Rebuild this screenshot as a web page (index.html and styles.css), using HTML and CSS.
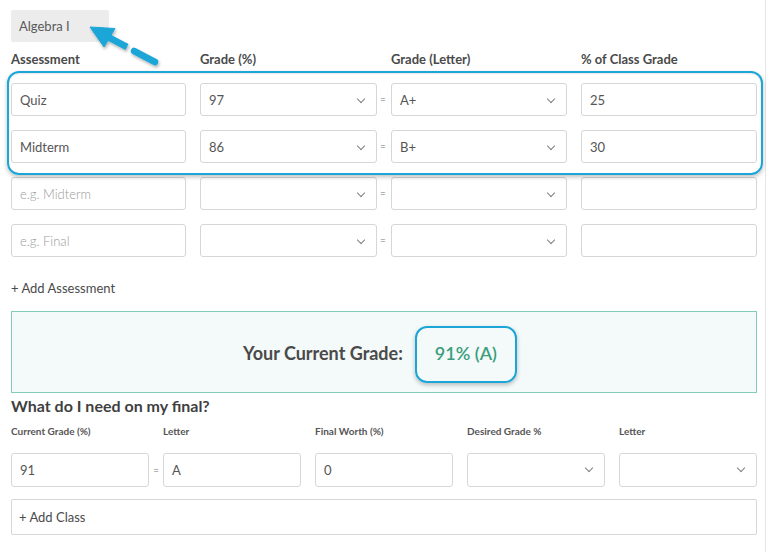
FILE: index.html
```html
<!DOCTYPE html>
<html>
<head>
<meta charset="utf-8">
<link rel="stylesheet" href="styles.css">
</head>
<body>
<div class="page">
  <div class="tabbar"><div class="tab">Algebra I</div></div>
  <svg class="arrow" width="180" height="80" viewBox="0 0 180 80">
    <defs>
      <filter id="sh" x="-20%" y="-20%" width="140%" height="140%">
        <feDropShadow dx="1" dy="2" stdDeviation="1.5" flood-color="#000" flood-opacity="0.3"/>
      </filter>
    </defs>
    <g filter="url(#sh)" fill="#1ba6d7" stroke="#1ba6d7">
      <polygon points="90,27 115,28.5 104,47" stroke-width="1" stroke-linejoin="round"/>
      <line x1="106" y1="36" x2="127" y2="47" stroke-width="6.5"/>
      <line x1="134" y1="51" x2="155" y2="62" stroke-width="6.5" stroke-linecap="round"/>
    </g>
  </svg>

  <div class="grid">
    <div class="hd">Assessment</div><div></div>
    <div class="hd">Grade (%)</div><div></div>
    <div class="hd">Grade (Letter)</div><div></div>
    <div class="hd">% of Class Grade</div>

    <div class="field">Quiz</div><div></div>
    <div class="field sel">97<span class="chev"></span></div><div class="eq">=</div>
    <div class="field sel">A+<span class="chev"></span></div><div></div>
    <div class="field">25</div>

    <div class="field">Midterm</div><div></div>
    <div class="field sel">86<span class="chev"></span></div><div class="eq">=</div>
    <div class="field sel">B+<span class="chev"></span></div><div></div>
    <div class="field">30</div>

    <div class="field ph">e.g. Midterm</div><div></div>
    <div class="field sel"><span class="chev"></span></div><div class="eq">=</div>
    <div class="field sel"><span class="chev"></span></div><div></div>
    <div class="field"></div>

    <div class="field ph">e.g. Final</div><div></div>
    <div class="field sel"><span class="chev"></span></div><div class="eq">=</div>
    <div class="field sel"><span class="chev"></span></div><div></div>
    <div class="field"></div>
  </div>
  <div class="hl-rows"></div>

  <div class="add">+ Add Assessment</div>

  <div class="result">
    <span class="res-label">Your Current Grade:</span>
    <span class="res-value">91% (A)<span class="hl-grade"></span></span>
  </div>

  <h2 class="final-title">What do I need on my final?</h2>

  <div class="fgrid">
    <div class="sub">Current Grade (%)</div>
    <div class="sub">Letter</div>
    <div class="sub">Final Worth (%)</div>
    <div class="sub">Desired Grade %</div>
    <div class="sub">Letter</div>

    <div class="field f2">91<span class="eq2">=</span></div>
    <div class="field f2">A</div>
    <div class="field f2">0</div>
    <div class="field f2 sel"><span class="chev"></span></div>
    <div class="field f2 sel"><span class="chev"></span></div>
  </div>

  <div class="addclass">+ Add Class</div>
</div>
</body>
</html>
```
FILE: styles.css
```css
* { box-sizing: border-box; }
html, body {
  margin: 0;
  padding: 0;
  background: #fff;
}
body {
  font-family: Lato, "Open Sans", Arial, sans-serif;
  color: #4a4a4a;
}
.page {
  position: relative;
  width: 766px;
  height: 552px;
  padding: 10px 0 0 11px;
  border-right: 1px solid #e6e6e6;
}
.tabbar { height: 32px; }
.tab {
  display: inline-block;
  width: 98px;
  height: 32px;
  line-height: 33px;
  padding-left: 8px;
  background: #ececec;
  border-radius: 2px;
  font-size: 13px;
  color: #5a5a5a;
}
.arrow {
  position: absolute;
  left: 0;
  top: 0;
}
.grid {
  display: grid;
  grid-template-columns: 175px 14px 177px 14px 176px 14px 176px;
  grid-template-rows: 27px 33px 33px 33px 33px;
  row-gap: 14px;
  width: 746px;
}
.hd {
  font-size: 13px;
  font-weight: 700;
  color: #4a4a4a;
  align-self: end;
  line-height: 16px;
  padding-bottom: 2px;
}
.field {
  position: relative;
  height: 33px;
  border: 1px solid #d6d6d6;
  border-radius: 3px;
  padding-left: 8px;
  font-size: 13px;
  line-height: 32px;
  color: #555;
  background: #fff;
}
.ph { color: #9a9a9a; font-weight: 300; }
.chev {
  position: absolute;
  right: 12px;
  top: 12px;
  width: 6px;
  height: 6px;
  border-right: 1.2px solid #808080;
  border-bottom: 1.2px solid #808080;
  transform: rotate(45deg);
}
.eq {
  font-size: 10px;
  color: #777;
  text-align: center;
  line-height: 33px;
  padding-right: 2px;
}
.hl-rows {
  position: absolute;
  left: 7px;
  top: 71px;
  width: 756px;
  height: 104px;
  border: 2.5px solid #1ba6d7;
  border-radius: 12px;
  box-shadow: 0 2px 4px rgba(0,0,0,0.25), inset 0 1px 2px rgba(0,0,0,0.1);
  pointer-events: none;
}
.add {
  margin-top: 23px;
  font-size: 13px;
  color: #4a4a4a;
  height: 16px;
  line-height: 16px;
}
.result {
  margin-top: 15px;
  width: 746px;
  height: 82px;
  background: #f4f9f9;
  border: 1px solid #85cbb9;
  display: flex;
  align-items: center;
  justify-content: center;
  padding-right: 28px;
  padding-top: 2px;
  gap: 32px;
  font-size: 18px;
}
.res-label { font-weight: 700; color: #4a4a4a; }
.res-value {
  position: relative;
  color: #3a9e7c;
  font-weight: 600;
}
.hl-grade {
  position: absolute;
  left: -20px;
  top: -16px;
  width: 102px;
  height: 57px;
  border: 2.5px solid #1ba6d7;
  border-radius: 12px;
  box-shadow: 0 2px 4px rgba(0,0,0,0.25);
}
.final-title {
  margin: 2px 0 0 0;
  font-size: 16px;
  font-weight: 700;
  color: #3f3f3f;
  line-height: 22px;
}
.fgrid {
  display: grid;
  grid-template-columns: repeat(5, 138px);
  column-gap: 14px;
  grid-template-rows: 22px 34px;
  row-gap: 14px;
  width: 746px;
}
.sub {
  font-size: 10px;
  font-weight: 700;
  color: #555;
  align-self: end;
  line-height: 13px;
  padding-bottom: 1px;
}
.f2 { height: 34px; line-height: 32px; }
.f2 .chev { top: 11px; }
.eq2 {
  position: absolute;
  right: -11px;
  top: 0;
  font-size: 10px;
  color: #777;
}
.addclass {
  margin-top: 12px;
  width: 746px;
  height: 36px;
  border: 1px solid #d6d6d6;
  border-radius: 2px;
  padding-left: 7px;
  font-size: 13px;
  line-height: 34px;
  color: #4a4a4a;
}
```
